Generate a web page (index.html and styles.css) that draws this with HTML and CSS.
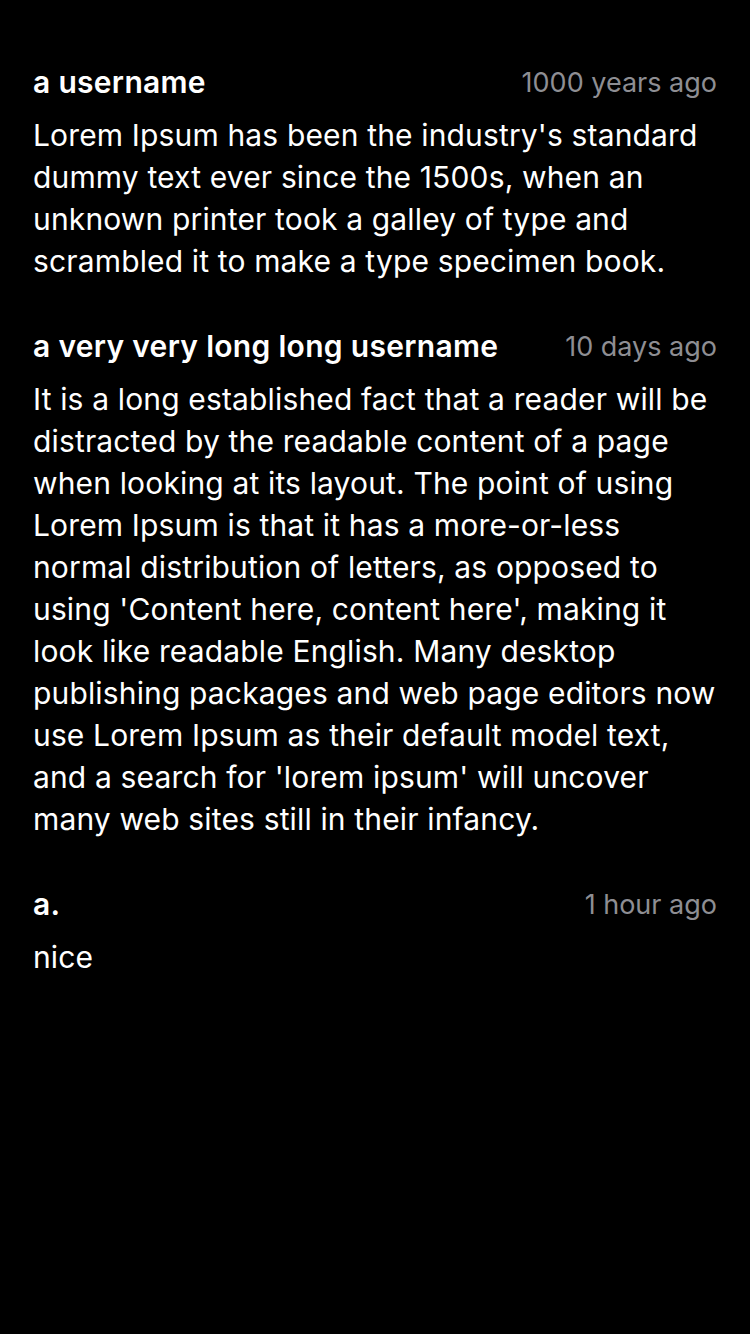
FILE: index.html
```html
<!DOCTYPE html>
<html>
<head>
<meta charset="utf-8">
<link rel="stylesheet" href="styles.css">
</head>
<body>
<main class="list">
  <article class="comment">
    <header class="head">
      <span class="user">a username</span>
      <span class="time">1000 years ago</span>
    </header>
    <p class="text">Lorem Ipsum has been the industry's standard dummy text ever since the 1500s, when an unknown printer took a galley of type and scrambled it to make a type specimen book.</p>
  </article>
  <article class="comment">
    <header class="head">
      <span class="user">a very very long long username</span>
      <span class="time">10 days ago</span>
    </header>
    <p class="text">It is a long established fact that a reader will be distracted by the readable content of a page when looking at its layout. The point of using Lorem Ipsum is that it has a more-or-less normal distribution of letters, as opposed to using 'Content here, content here', making it look like readable English. Many desktop publishing packages and web page editors now use Lorem Ipsum as their default model text, and a search for 'lorem ipsum' will uncover many web sites still in their infancy.</p>
  </article>
  <article class="comment">
    <header class="head">
      <span class="user">a.</span>
      <span class="time">1 hour ago</span>
    </header>
    <p class="text">nice</p>
  </article>
</main>
</body>
</html>
```
FILE: styles.css
```css
html, body {
  margin: 0;
  padding: 0;
  background: #000;
}
body {
  font-family: Inter, "Noto Sans", sans-serif;
  color: #fff;
  -webkit-font-smoothing: antialiased;
}
.list {
  display: flex;
  flex-direction: column;
  gap: 42px;
  padding: 60px 33px 0 33px;
}
.comment {
  display: flex;
  flex-direction: column;
  gap: 12px;
}
.head {
  display: flex;
  justify-content: space-between;
  align-items: center;
  gap: 20px;
  height: 42px;
  line-height: 42px;
}
.user {
  font-size: 30px;
  font-weight: 600;
  letter-spacing: 0.3px;
  padding-top: 1px;
}
.time {
  font-size: 27px;
  color: #8e8e93;
  padding-top: 3px;
}
.text {
  margin: 0;
  font-size: 30px;
  line-height: 42px;
  letter-spacing: 0.15px;
}
```
